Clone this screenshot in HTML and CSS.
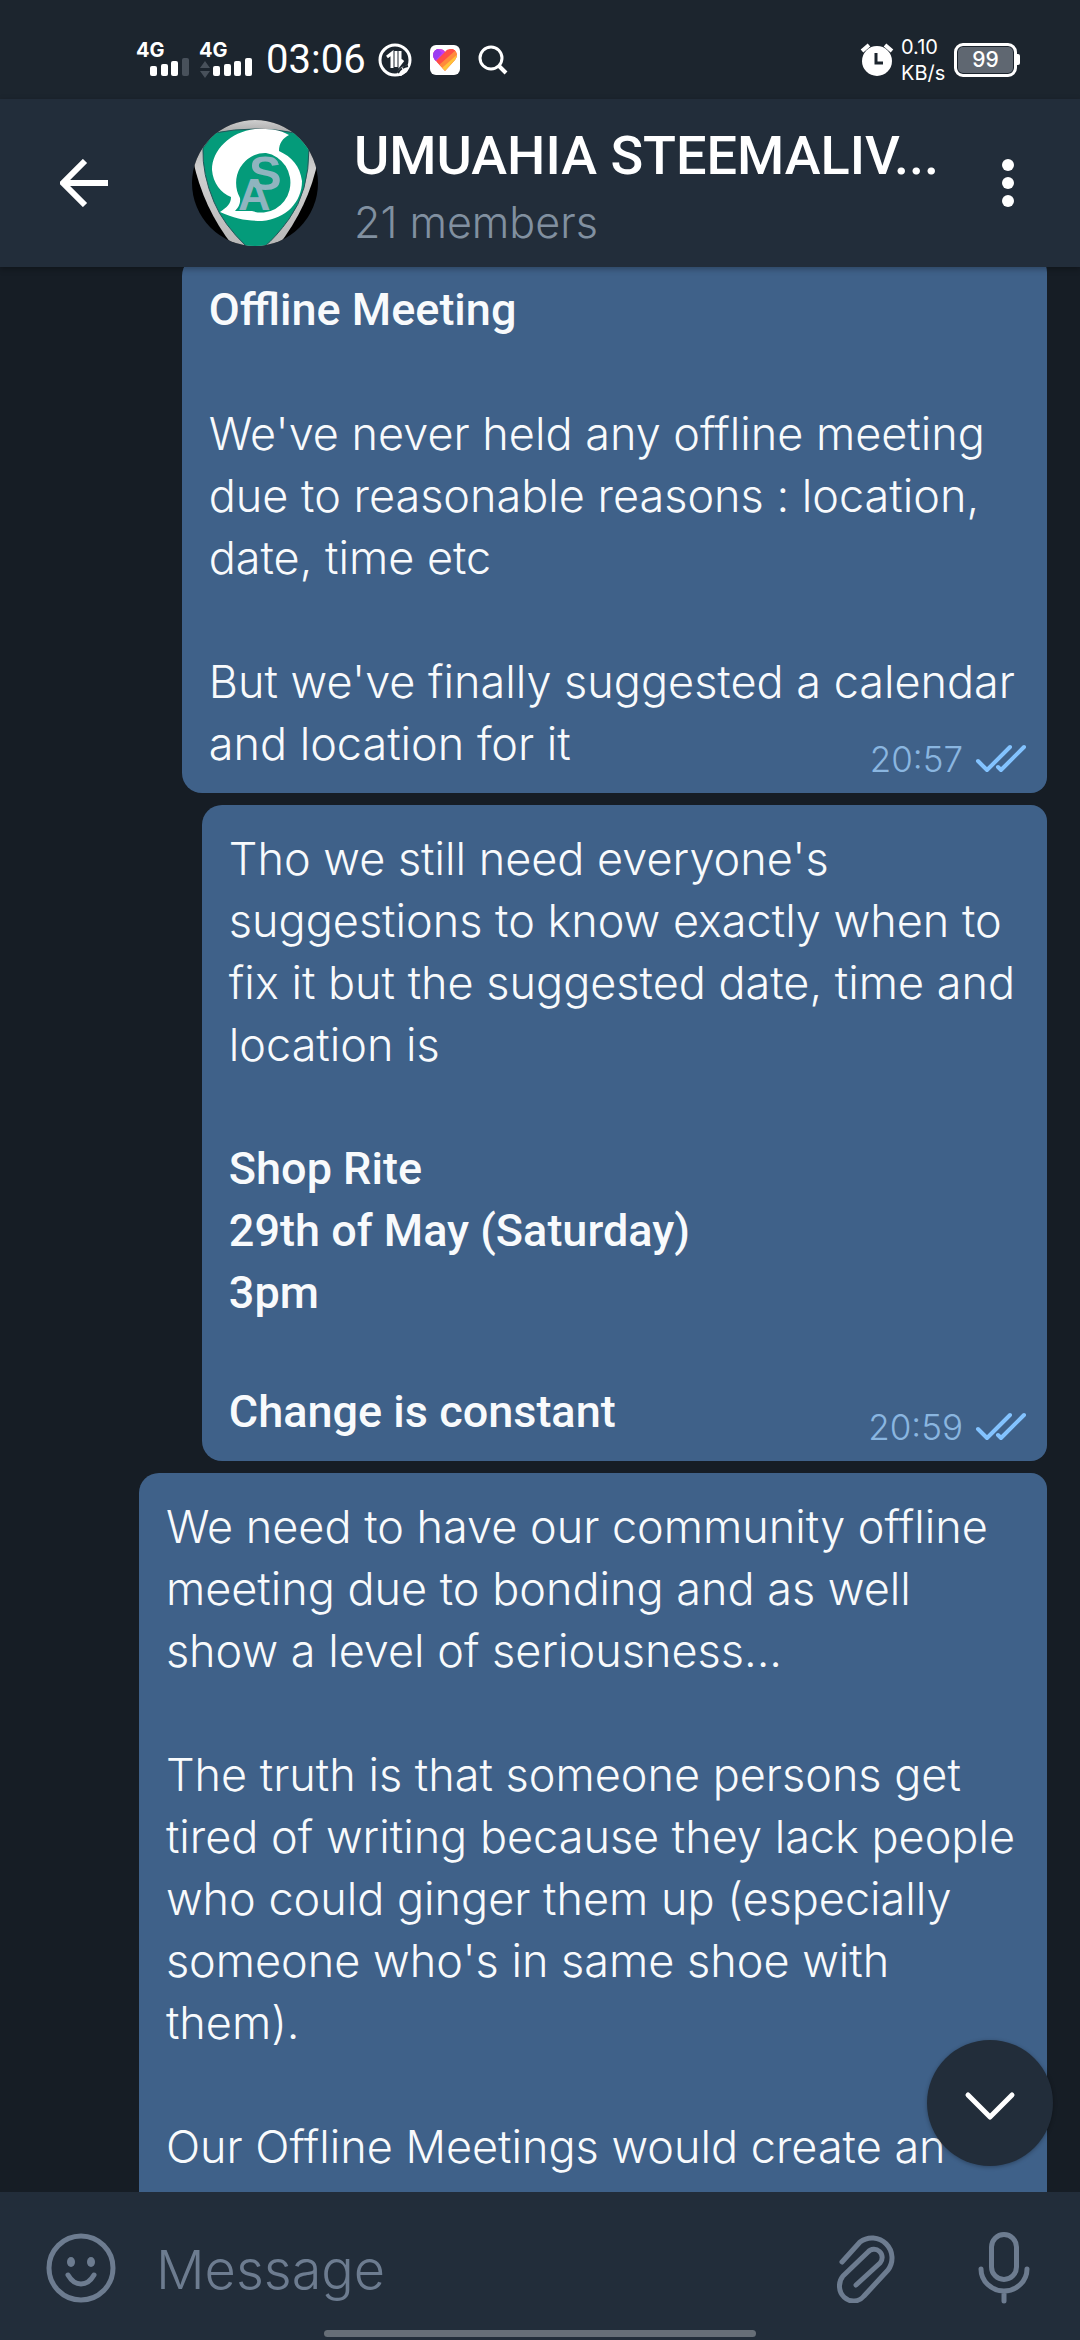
FILE: index.html
```html
<!DOCTYPE html>
<html lang="en">
<head>
<meta charset="utf-8">
<meta name="viewport" content="width=device-width, initial-scale=1">
<title>UMUAHIA STEEMALIV...</title>
<link rel="stylesheet" href="styles.css">
</head>
<body>
<div class="app">
  <div class="status">
    <div class="status-group">
      <div class="signals">
        <svg class="signal" viewBox="0 0 54 40" aria-hidden="true">
          <text class="net" x="0" y="17">4G</text>
          <g fill="#fff"><rect x="14" y="26" width="7" height="10" rx="2"/><rect x="25" y="24" width="7" height="12" rx="2"/><rect x="35" y="21" width="7" height="15" rx="2"/></g>
          <rect x="46" y="18" width="7" height="18" rx="2" fill="#48515b"/>
        </svg>
        <svg class="signal" viewBox="0 0 54 40" aria-hidden="true">
          <text class="net" x="0" y="17">4G</text>
          <path d="M1 28l5-7 5 7zM1 31l5 7 5-7z" fill="#48515b"/>
          <g fill="#fff"><rect x="14" y="26" width="7" height="10" rx="2"/><rect x="25" y="24" width="7" height="12" rx="2"/><rect x="35" y="21" width="7" height="15" rx="2"/><rect x="46" y="18" width="7" height="18" rx="2"/></g>
        </svg>
      </div>
      <time class="clock">03:06</time>
      <div class="notices">
        <svg width="34" height="34" viewBox="0 0 34 34" aria-hidden="true">
          <circle cx="17" cy="17" r="15" fill="none" stroke="#fff" stroke-width="3"/>
          <path d="M9 14l5-4v15M18 8v16M22 8v13l3-4" fill="none" stroke="#fff" stroke-width="3"/>
          <path d="M19 32c1-7 5-9 13-10l-3 7-6 4z" fill="#fff"/>
          <path d="M20 30c2-4 5-6 10-7" fill="none" stroke="#1c252e" stroke-width="2" stroke-dasharray="6 1"/>
        </svg>
        <svg width="30" height="30" viewBox="0 0 30 30" aria-hidden="true">
          <defs><clipPath id="heart"><path d="M15 26L5 15C1 10 4 4 9 4c3 0 5 1 6 3 1-2 3-3 6-3 5 0 8 6 4 11z"/></clipPath></defs>
          <rect width="30" height="30" rx="6" fill="#fff"/>
          <g clip-path="url(#heart)">
            <path d="M0 0h30v30H0z" fill="#ff4b4b"/>
            <path d="M0 0h15v7L5 17H0z" fill="#c53df0"/>
            <path d="M0 8l6-6 6 6-7 8z" fill="#9a3df2"/>
            <path d="M7 17L22 2l4 3L10 20z" fill="#ff4f45"/>
            <path d="M9 20L27 4l3 4-17 16z" fill="#ff8a3c"/>
            <path d="M12 23L29 8v22H15z" fill="#ffc23a"/>
          </g>
        </svg>
        <svg width="30" height="30" viewBox="0 0 30 30" aria-hidden="true">
          <circle cx="13" cy="13" r="11" fill="none" stroke="#fff" stroke-width="3"/>
          <path d="M21 21l7 7" stroke="#fff" stroke-width="4"/>
        </svg>
      </div>
    </div>
    <div class="status-group status-right">
      <svg width="34" height="34" viewBox="0 0 34 34" aria-hidden="true">
        <circle cx="17" cy="18" r="15" fill="#fff"/>
        <path d="M2 8l7-6M32 8l-7-6" stroke="#fff" stroke-width="4"/>
        <path d="M16 10v10h7" fill="none" stroke="#1c252e" stroke-width="3"/>
      </svg>
      <div class="speed"><span>0.10</span><span>KB/s</span></div>
      <div class="battery"><span class="level">99</span><i class="nub"></i></div>
    </div>
  </div>

  <header class="header">
    <button class="icon-button back" aria-label="Back">
      <svg width="48" height="48" viewBox="0 0 48 48" aria-hidden="true"><path d="M48 24H5M25 2L3 24l22 22" fill="none" stroke="#fff" stroke-width="6"/></svg>
    </button>
    <svg class="avatar" viewBox="0 0 126 126" role="img" aria-label="Group photo">
      <defs>
        <clipPath id="round"><circle cx="63" cy="63" r="63"/></clipPath>
        <linearGradient id="silver" x1="0" y1="0" x2="0" y2="1"><stop offset="0" stop-color="#cfcfcf"/><stop offset=".1" stop-color="#a9a9a9"/><stop offset=".4" stop-color="#d0d0d0"/><stop offset="1" stop-color="#b8b8b8"/></linearGradient>
      </defs>
      <g clip-path="url(#round)">
        <path d="M0 0h126v126H0z"/>
        <path d="M4 0H122L126 40Q117 86 86 126H41Q11 88 1 40z" fill="url(#silver)"/>
        <path d="M22 13Q63 5 104 13L117 28Q117 72 97 99 84 117 72 127H55Q31 104 22 82 10 54 11 28z" fill="#049b7a" stroke="#24575a" stroke-width="1"/>
        <path d="M97 15C85 8 74 9 63 9 38 12 20 30 20 50 21 63 29 73 39 77 39 84 35 87 28 92 43 99 56 101 70 101 94 99 110 82 110 61 108 46 100 37 87 31 87 23 91 18 97 15z" fill="#fff"/>
        <path d="M74 33A29 30 0 1 1 60 91H43Q49 85 48 78A29 30 0 0 1 74 33z" fill="#049b7a"/>
        <text class="crest" x="57" y="70" font-size="49">S</text>
        <text class="crest" x="46" y="90" font-size="45">A</text>
      </g>
    </svg>
    <div class="titles">
      <h1 class="title">UMUAHIA STEEMALIV...</h1>
      <p class="members">21 members</p>
    </div>
    <button class="icon-button" aria-label="More options">
      <svg width="12" height="48" viewBox="0 0 12 48" aria-hidden="true"><g fill="#fff"><circle cx="6" cy="6" r="6"/><circle cx="6" cy="24" r="6"/><circle cx="6" cy="42" r="6"/></g></svg>
    </button>
  </header>

  <main class="chat">
    <div class="messages">
      <article class="bubble">
        <p class="strong">Offline Meeting</p>
        <p>We've never held any offline meeting<br>due to reasonable reasons : location,<br>date, time etc</p>
        <p>But we've finally suggested a calendar<br>and location for it</p>
        <div class="meta"><time>20:57</time>
          <svg width="52" height="30" viewBox="0 0 52 30" aria-hidden="true"><path d="M3 17l9 9L35 3M23 23l3 3L49 3" fill="none" stroke="#83c3ff" stroke-width="4" stroke-linecap="round" stroke-linejoin="round"/></svg>
        </div>
      </article>
      <article class="bubble">
        <p>Tho we still need everyone's<br>suggestions to know exactly when to<br>fix it but the suggested date, time and<br>location is</p>
        <p class="strong">Shop Rite<br>29th of May (Saturday)<br>3pm</p>
        <p class="strong closing">Change is constant</p>
        <div class="meta"><time>20:59</time>
          <svg width="52" height="30" viewBox="0 0 52 30" aria-hidden="true"><path d="M3 17l9 9L35 3M23 23l3 3L49 3" fill="none" stroke="#83c3ff" stroke-width="4" stroke-linecap="round" stroke-linejoin="round"/></svg>
        </div>
      </article>
      <article class="bubble continued">
        <p>We need to have our community offline<br>meeting due to bonding and as well<br>show a level of seriousness...</p>
        <p>The truth is that someone persons get<br>tired of writing because they lack people<br>who could ginger them up (especially<br>someone who's in same shoe with<br>them).</p>
        <p>Our Offline Meetings would create an</p>
      </article>
    </div>
    <button class="scroll-down" aria-label="Scroll to latest message">
      <svg width="52" height="30" viewBox="0 0 52 30" aria-hidden="true"><path d="M4 4l22 22L48 4" fill="none" stroke="#fff" stroke-width="5" stroke-linecap="round" stroke-linejoin="round"/></svg>
    </button>
  </main>

  <footer class="composer">
    <form class="composer-row">
      <button type="button" class="icon-button" aria-label="Emoji">
        <svg width="70" height="70" viewBox="0 0 70 70" aria-hidden="true"><circle cx="35" cy="35" r="32" fill="none" stroke="#6d7c90" stroke-width="5"/><g fill="#6d7c90"><ellipse cx="25" cy="29" rx="4" ry="5"/><ellipse cx="45" cy="29" rx="4" ry="5"/></g><path d="M22 42c7 12 19 12 26 0" fill="none" stroke="#6d7c90" stroke-width="5" stroke-linecap="round"/></svg>
      </button>
      <input class="field" type="text" placeholder="Message" aria-label="Message">
      <button type="button" class="icon-button" aria-label="Attach">
        <svg width="60" height="70" viewBox="0 0 60 70" aria-hidden="true"><path d="M5 29L23 9A20 20 0 0 1 51 37L27 63A14 15 0 0 1 6 43L31 19A8 8 0 0 1 43 30L19 52" fill="none" stroke="#6d7c90" stroke-width="5" stroke-linecap="round" stroke-linejoin="round"/></svg>
      </button>
      <button type="button" class="icon-button mic" aria-label="Record voice message">
        <svg width="52" height="72" viewBox="0 0 52 72" aria-hidden="true"><g fill="none" stroke="#6d7c90" stroke-width="5" stroke-linecap="round"><rect x="13.500" y="2.500" width="25" height="45" rx="12.500"/><path d="M3 37a23 22 0 0 0 46 0M26 60v9"/></g></svg>
      </button>
    </form>
    <div class="home-bar"></div>
  </footer>
</div>
</body>
</html>
```
FILE: styles.css
```css
* { box-sizing: border-box; margin: 0; padding: 0; }
body { background: #161d25; color: #f8fafc; font-family: Inter, "Liberation Sans", sans-serif; font-weight: 300; }
svg { display: block; flex: none; }
button { border: 0; background: none; cursor: pointer; }

.app { display: flex; flex-direction: column; height: 100vh; overflow: hidden; }

.status { display: flex; justify-content: space-between; align-items: center; flex: none; height: 99px; padding: 20px 60px 0 136px; background: #1c252e; color: #fff; }
.status-group { display: flex; align-items: center; }
.signals { display: flex; gap: 9px; }
.signal { width: 54px; height: 40px; overflow: visible; }
.net { fill: #fff; font-size: 20px; font-weight: 700; }
.clock { margin: 0 12px 0 13px; font-family: Roboto, sans-serif; font-size: 40px; line-height: 40px; font-weight: 400; }
.notices { display: flex; align-items: center; gap: 18px; }
.status-right { gap: 7px; }
.speed { display: flex; flex-direction: column; width: 46px; font-size: 20px; line-height: 26px; font-weight: 400; }
.battery { display: flex; align-items: center; }
.level { width: 63px; height: 34px; border: 3px solid #fff; border-radius: 9px; background: #5f6771; box-shadow: inset 0 0 0 1px #1c252e; font-size: 21px; line-height: 28px; font-weight: 500; text-align: center; }
.nub { width: 3px; height: 11px; background: #fff; border-radius: 0 2px 2px 0; }

.header { display: flex; align-items: center; flex: none; position: relative; z-index: 1; height: 168px; padding: 0 66px 0 60px; background: #222d3a; box-shadow: 0 2px 6px rgba(0, 0, 0, .3); }
.icon-button { display: flex; justify-content: center; align-items: center; flex: none; }
.avatar { width: 126px; height: 126px; margin: 0 36px 0 84px; }
.crest { fill: #8fb4bf; font-family: "Liberation Sans", sans-serif; font-weight: 700; }
.titles { flex: 1; min-width: 0; margin-right: 48px; padding-top: 10px; }
.title { overflow: hidden; white-space: nowrap; text-overflow: ellipsis; font-family: Roboto, sans-serif; font-size: 54px; line-height: 68px; font-weight: 500; color: #fff; }
.members { font-size: 43px; line-height: 64px; color: #8190a0; }

.chat { flex: 1; min-height: 0; position: relative; overflow: hidden; }
.messages { display: flex; flex-direction: column; align-items: flex-end; gap: 12px; margin-top: -11px; padding-right: 33px; }
.bubble { position: relative; flex: none; padding: 23px 32px 18px 27px; border-radius: 20px 16px 16px 20px; background: #3f6189; font-size: 45px; line-height: 62px; }
.bubble p + p { margin-top: 62px; }
.bubble .strong { font-family: Roboto, sans-serif; font-weight: 500; }
.bubble p + .closing { margin-top: 57px; }
.continued { padding-bottom: 80px; }
.meta { display: flex; align-items: center; gap: 12px; position: absolute; right: 20px; bottom: 12px; font-size: 35px; line-height: 44px; color: #8ab6e0; }
.scroll-down { display: flex; justify-content: center; align-items: center; position: absolute; right: 27px; bottom: 26px; width: 126px; height: 126px; padding-top: 6px; border-radius: 50%; background: #222d3a; box-shadow: 0 1px 4px rgba(0, 0, 0, .3); }

.composer { flex: none; background: #222d3a; }
.composer-row { display: flex; align-items: center; height: 138px; padding: 14px 50px 0 46px; }
.field { flex: 1; min-width: 0; margin: 0 42px 0 40px; padding-top: 4px; border: 0; outline: 0; background: none; font: inherit; font-size: 54px; line-height: 72px; color: #fff; }
.field::placeholder { color: #6d7c90; opacity: 1; }
.mic { margin-left: 81px; }
.home-bar { width: 40%; height: 7px; margin: 0 auto 3px; border-radius: 4px; background: #666e77; }
```
